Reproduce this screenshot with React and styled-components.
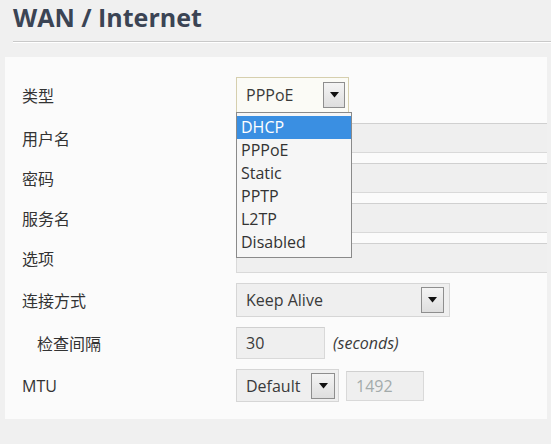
import React from "react";
import styled, { createGlobalStyle } from "styled-components";

const GlobalStyle = createGlobalStyle`
  body {
    margin: 0;
    background: #f0f0f0;
    font-family: "Open Sans", "Noto Sans CJK SC", sans-serif;
    color: #333;
  }
`;

const Page = styled.div`
  width: 551px;
  height: 444px;
  overflow: hidden;
  background: #f0f0f0;
`;

const Header = styled.h1`
  margin: 0 0 0 13px;
  height: 41px;
  font-size: 25px;
  font-weight: 700;
  line-height: 35px;
  color: #3b4454;
  border-bottom: 1px solid #c9c9c9;
  box-shadow: 0 1px 0 #fff;
`;

const Panel = styled.div`
  margin: 15px 0 0 5px;
  width: 542px;
  background: #fbfbfb;
  padding: 20px 0 17px 17px;
  box-sizing: border-box;
  overflow: hidden;
  display: flex;
  flex-direction: column;
  gap: 10px;
`;

const Row = styled.div`
  display: flex;
  align-items: center;
  height: ${(p) => p.h}px;
`;

const Label = styled.div`
  flex-shrink: 0;
  box-sizing: border-box;
  width: 214px;
  padding-left: ${(p) => (p.indent ? 15 : 0)}px;
  font-size: 16px;
  color: #333;
  white-space: nowrap;
`;

const Field = styled.div`
  display: flex;
  align-items: center;
  gap: ${(p) => p.gap || 0}px;
  height: 100%;
  flex-shrink: 0;
`;

const SelectBox = styled.div`
  position: relative;
  box-sizing: border-box;
  width: ${(p) => p.w}px;
  height: 100%;
  display: flex;
  align-items: center;
  justify-content: space-between;
  padding: 0 ${(p) => p.inset}px 0 9px;
  font-size: 16px;
  color: #3a3a3a;
  background: ${(p) => (p.focus ? "#fbfbf6" : "#efefef")};
  border: 1px solid ${(p) => (p.focus ? "#d6cfae" : "#d6d6d6")};
`;

const ArrowButton = styled.div`
  box-sizing: border-box;
  width: ${(p) => p.w}px;
  height: 26px;
  border: 1px solid #8e8e8e;
  background: linear-gradient(#f4f4f4, #dedede);
  display: flex;
  align-items: center;
  justify-content: center;
  svg {
    display: block;
  }
`;

const TextBox = styled.div`
  box-sizing: border-box;
  width: ${(p) => p.w}px;
  height: ${(p) => p.h || 30}px;
  display: flex;
  align-items: center;
  padding-left: 9px;
  font-size: 16px;
  color: ${(p) => (p.dim ? "#a3abab" : "#3a3a3a")};
  background: #efefef;
  border: 1px solid #d9d9d9;
  border-top-color: #d0d0d0;
  flex-shrink: 0;
`;

const Unit = styled.span`
  font-size: 16px;
  font-style: italic;
  color: #3a3a3a;
`;

const OptionList = styled.ul`
  position: absolute;
  top: 100%;
  left: -1px;
  width: 116px;
  margin: 0;
  padding: 3px 0;
  list-style: none;
  background: #f6f6f6;
  border: 1px solid #8a8a8a;
  box-sizing: border-box;
  z-index: 2;
`;

const Option = styled.li`
  height: 23px;
  line-height: 23px;
  padding-left: 4px;
  font-size: 16px;
  color: ${(p) => (p.active ? "#fff" : "#333")};
  background: ${(p) => (p.active ? "#3a8fe2" : "transparent")};
`;

const Arrow = () => (
  <svg width="9" height="6" viewBox="0 0 9 6">
    <path d="M0 0 L9 0 L4.5 5.5 Z" fill="#111" />
  </svg>
);

const Select = ({ value, w, inset = 3, btn = 22, focus, children }) => (
  <SelectBox w={w} inset={inset} focus={focus}>
    <span>{value}</span>
    <ArrowButton w={btn}>
      <Arrow />
    </ArrowButton>
    {children}
  </SelectBox>
);

const options = ["DHCP", "PPPoE", "Static", "PPTP", "L2TP", "Disabled"];

export default function App() {
  return (
    <Page>
      <GlobalStyle />
      <Header>WAN / Internet</Header>
      <Panel>
        <Row h={36}>
          <Label>类型</Label>
          <Field>
            <Select value="PPPoE" w={113} focus>
              <OptionList>
                {options.map((o, i) => (
                  <Option key={o} active={i === 0}>
                    {o}
                  </Option>
                ))}
              </OptionList>
            </Select>
          </Field>
        </Row>
        <Row h={30}>
          <Label>用户名</Label>
          <TextBox w={340} />
        </Row>
        <Row h={30}>
          <Label>密码</Label>
          <TextBox w={340} />
        </Row>
        <Row h={30}>
          <Label>服务名</Label>
          <TextBox w={340} />
        </Row>
        <Row h={30}>
          <Label>选项</Label>
          <TextBox w={340} />
        </Row>
        <Row h={34}>
          <Label>连接方式</Label>
          <Field>
            <Select value="Keep Alive" w={214} inset={5} btn={23} />
          </Field>
        </Row>
        <Row h={32}>
          <Label indent>检查间隔</Label>
          <Field gap={8}>
            <TextBox w={89} h={32}>30</TextBox>
            <Unit>(seconds)</Unit>
          </Field>
        </Row>
        <Row h={33}>
          <Label>MTU</Label>
          <Field gap={7}>
            <Select value="Default" w={103} btn={24} />
            <TextBox w={78} dim>
              1492
            </TextBox>
          </Field>
        </Row>
      </Panel>
    </Page>
  );
}
